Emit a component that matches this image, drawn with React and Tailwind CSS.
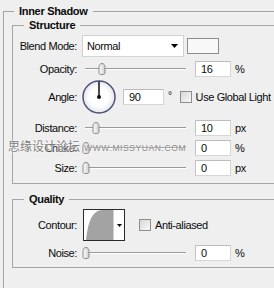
import React from "react";

function Thumb({ className }) {
  return (
    <svg className={"absolute top-[1px] " + className} width="8" height="12" viewBox="0 0 8 12">
      <defs>
        <linearGradient id="tg" x1="0" y1="0" x2="1" y2="0">
          <stop offset="0" stopColor="#ffffff" />
          <stop offset="1" stopColor="#cfcfcf" />
        </linearGradient>
      </defs>
      <path
        d="M1 4.5 C1 1.5 2.5 0.5 4 0.5 C5.5 0.5 7 1.5 7 4.5 L7 10 C7 11 6 11.5 4 11.5 C2 11.5 1 11 1 10 Z"
        fill="url(#tg)"
        stroke="#8a8a8a"
        strokeWidth="1"
      />
    </svg>
  );
}

function Slider({ thumb }) {
  return (
    <div className="relative ml-[8px] flex h-[14px] w-[101px] items-center">
      <div className="h-[2px] w-full border-t border-b border-t-[#9a9a9a] border-b-white" />
      <Thumb className={thumb} />
    </div>
  );
}

function Field({ value, w = "w-[36px]" }) {
  return (
    <div
      className={
        "flex h-[16px] items-center border border-[#d6d6d6] border-t-[#bcbcbc] border-l-[#c4c4c4] bg-white pl-[5px] " +
        w
      }
    >
      {value}
    </div>
  );
}

function Label({ children }) {
  return <div className="w-[64px] shrink-0 text-right">{children}</div>;
}

function SliderRow({ label, thumb, value, unit, h = "h-[20px]", mt = "" }) {
  return (
    <div className={"flex items-center " + h + " " + mt}>
      <Label>{label}</Label>
      <Slider thumb={thumb} />
      <div className="ml-[9px]">
        <Field value={value} />
      </div>
      <div className="ml-[4px]">{unit}</div>
    </div>
  );
}

function Checkbox() {
  return (
    <div className="h-[12px] w-[12px] shrink-0 border border-[#8e8e8e] bg-linear-to-br from-[#d8d8d8] to-[#f8f8f8]" />
  );
}

export default function App() {
  return (
    <div className="relative h-[288px] w-[274px] overflow-hidden bg-[#efefef] font-['Liberation_Sans',Arial,sans-serif] text-[11px] leading-[14px] tracking-[-0.4px] text-[#0a0a0a]">
      <fieldset className="ml-[3px] mt-[4px] h-[330px] w-[300px] min-w-0 border border-[#a5a5a5] p-0">
        <legend className="ml-[10px] h-[15px] px-[5px] font-bold leading-[15px] tracking-[-0.3px]">
          Inner Shadow
        </legend>

        <fieldset className="ml-[8px] mt-[-1px] w-[290px] min-w-0 border border-[#a5a5a5] p-0 pb-[5px]">
          <legend className="ml-[11px] h-[15px] px-[5px] font-bold leading-[15px] tracking-[-0.3px]">
            Structure
          </legend>

          {/* Blend mode */}
          <div className="mt-[2px] flex h-[22px] items-center">
            <Label>Blend Mode:</Label>
            <div className="ml-[5px] flex h-[22px] w-[102px] items-center justify-between border border-[#d2d2d2] bg-white pl-[4px] pr-[5px]">
              <span>Normal</span>
              <svg width="7" height="4" viewBox="0 0 7 4">
                <path d="M0 0 L7 0 L3.5 4 Z" fill="#000" />
              </svg>
            </div>
            <div className="ml-[3px] h-[16px] w-[32px] border border-[#8c8c8c] bg-[#f8f8f8]" />
          </div>

          <SliderRow label="Opacity:" thumb="left-[13px]" value="16" unit="%" h="h-[18px]" mt="mt-[3px]" />

          {/* Angle */}
          <div className="mt-[2px] flex h-[34px] items-center">
            <Label>Angle:</Label>
            <svg className="ml-[5px] shrink-0" width="34" height="34" viewBox="0 0 34 34">
              <defs>
                <radialGradient id="dg" cx="0.5" cy="0.5" r="0.5">
                  <stop offset="0.6" stopColor="#ffffff" />
                  <stop offset="1" stopColor="#e4e4ec" />
                </radialGradient>
              </defs>
              <circle cx="17" cy="17" r="16" fill="url(#dg)" stroke="#4d5378" strokeWidth="1.5" />
              <line x1="17" y1="17" x2="17" y2="1.5" stroke="#111" strokeWidth="1.5" />
              <circle cx="17" cy="17" r="2" fill="#111" />
            </svg>
            <div className="ml-[7px]">
              <Field value="90" w="w-[41px]" />
            </div>
            <div className="ml-[4px] self-start pt-[9px] text-[10px]">°</div>
            <div className="ml-[8px]">
              <Checkbox />
            </div>
            <div className="ml-[4px] whitespace-nowrap">Use Global Light</div>
          </div>

          <SliderRow label="Distance:" thumb="left-[7px]" value="10" unit="px" mt="mt-[4px]" />
          <SliderRow label="Choke:" thumb="left-[-3px]" value="0" unit="%" />
          <SliderRow label="Size:" thumb="left-[-3px]" value="0" unit="px" />
        </fieldset>

        <fieldset className="ml-[8px] mt-[8px] w-[290px] min-w-0 border border-[#a5a5a5] p-0 pb-[4px]">
          <legend className="ml-[11px] h-[15px] px-[5px] font-bold leading-[15px] tracking-[-0.3px]">
            Quality
          </legend>

          <div className="mt-[2px] flex h-[32px] items-center">
            <Label>Contour:</Label>
            <div className="ml-[6px] flex h-[32px] w-[42px] border border-[#2a2a2a] bg-white">
              <svg width="29" height="30" viewBox="0 0 29 30">
                <path d="M2 30 Q5 0 18 0 L29 0 L29 30 Z" fill="#a3a3a3" />
              </svg>
              <div className="flex flex-1 items-center justify-center border-l border-[#cfcfcf]">
                <svg width="5" height="3" viewBox="0 0 5 3">
                  <path d="M0 0 L5 0 L2.5 3 Z" fill="#000" />
                </svg>
              </div>
            </div>
            <div className="ml-[14px]">
              <Checkbox />
            </div>
            <div className="ml-[4px] whitespace-nowrap">Anti-aliased</div>
          </div>

          <SliderRow label="Noise:" thumb="left-[-3px]" value="0" unit="%" mt="mt-[2px]" />
        </fieldset>
      </fieldset>

      {/* watermark */}
      <div className="absolute left-[8px] top-[139px] flex items-center whitespace-nowrap">
        <span className="font-['Noto_Sans_CJK_SC',sans-serif] text-[12px] leading-[14px] tracking-[0px] text-[#7c7c7c] [text-shadow:0_0_2px_#fff,0_0_2px_#fff]">
          思缘设计论坛
        </span>
        <span className="ml-[4px] mt-[4px] font-['Liberation_Sans',sans-serif] text-[8.5px] leading-[10px] tracking-[0.6px] text-[#8a8a8a] [text-shadow:0_0_2px_#fff]">
          WWW.MISSYUAN.COM
        </span>
      </div>
    </div>
  );
}
